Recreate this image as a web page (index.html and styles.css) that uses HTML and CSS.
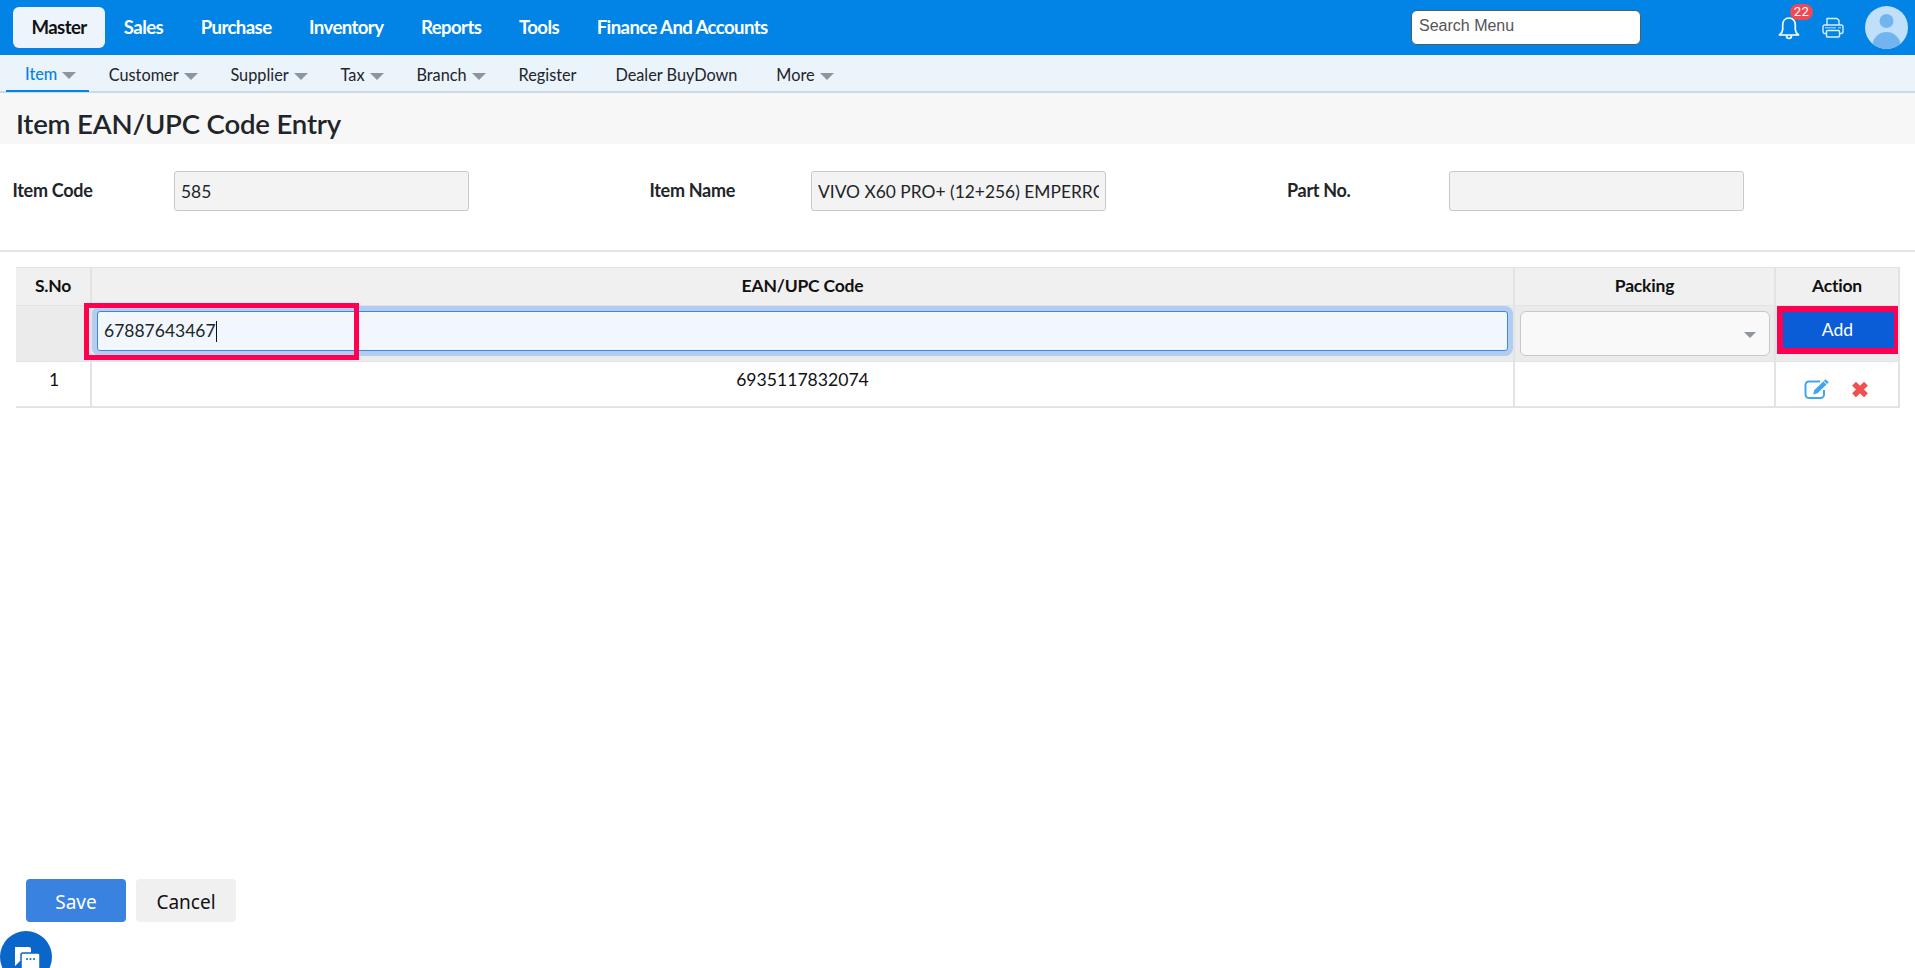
FILE: index.html
```html
<!DOCTYPE html>
<html lang="en">
<head>
<meta charset="utf-8">
<title>Item EAN/UPC Code Entry</title>
<link rel="stylesheet" href="styles.css">
</head>
<body>
<div class="page">
  <header class="topbar">
    <nav class="mainnav">
      <a class="mainlink active">Master</a>
      <a class="mainlink">Sales</a>
      <a class="mainlink">Purchase</a>
      <a class="mainlink">Inventory</a>
      <a class="mainlink">Reports</a>
      <a class="mainlink">Tools</a>
      <a class="mainlink">Finance And Accounts</a>
    </nav>
    <input class="search" type="text" placeholder="Search Menu">
    <div class="bell">
      <svg class="bellicon" width="24" height="25" viewBox="0 0 24 25" fill="none" stroke="#fff" stroke-width="1.700" stroke-linejoin="round"><path d="M12 2c-4 0-6.300 3-6.300 7v4.500c0 2.500-1.500 4-3.200 5.500h19c-1.700-1.500-3.200-3-3.200-5.500V9c0-4-2.300-7-6.300-7z"/><path d="M9.500 19.500c0 4 5 4 5 0"/></svg>
      <span class="badge">22</span>
    </div>
    <svg class="printer" width="22" height="22" viewBox="0 0 22 22" fill="none" stroke="#d8edff" stroke-width="1.400" stroke-linejoin="round"><path d="M5 8V1.500h10L17 3.500V8"/><path d="M4.500 16.500H3a2 2 0 0 1-2-2V10a2 2 0 0 1 2-2h16a2 2 0 0 1 2 2v4.500a2 2 0 0 1-2 2h-1.500"/><rect x="4.500" y="13.500" width="13" height="6.500" rx="1"/><path d="M3 10.800h11M16 10.800h3" stroke-width="0.900"/></svg>
    <svg class="avatar" width="43" height="43" viewBox="0 0 43 43"><defs><clipPath id="avatarclip"><circle cx="21.500" cy="21.500" r="21.500"/></clipPath></defs><circle cx="21.500" cy="21.500" r="21.500" fill="#bfdffb"/><g clip-path="url(#avatarclip)" fill="#72b4ee"><circle cx="21.500" cy="15" r="7"/><ellipse cx="21.500" cy="41" rx="14.500" ry="15"/></g></svg>
  </header>

  <nav class="subnav">
    <a class="sublink current">Item<i class="caret"></i></a>
    <a class="sublink">Customer<i class="caret"></i></a>
    <a class="sublink">Supplier<i class="caret"></i></a>
    <a class="sublink">Tax<i class="caret"></i></a>
    <a class="sublink">Branch<i class="caret"></i></a>
    <a class="sublink">Register</a>
    <a class="sublink">Dealer BuyDown</a>
    <a class="sublink">More<i class="caret"></i></a>
  </nav>

  <div class="titlebar"><h1 class="title">Item EAN/UPC Code Entry</h1></div>

  <section class="fields">
    <div class="field"><label class="fieldlabel">Item Code</label><input class="readonly" type="text" readonly value="585"></div>
    <div class="field"><label class="fieldlabel">Item Name</label><input class="readonly" type="text" readonly value="VIVO X60 PRO+ (12+256) EMPERROR BLUE"></div>
    <div class="field"><label class="fieldlabel">Part No.</label><input class="readonly" type="text" readonly value=""></div>
  </section>

  <main class="tablewrap">
    <table class="grid">
      <colgroup><col class="c1"><col class="c2"><col class="c3"><col class="c4"></colgroup>
      <thead>
        <tr><th>S.No</th><th>EAN/UPC Code</th><th>Packing</th><th>Action</th></tr>
      </thead>
      <tbody>
        <tr class="entry">
          <td></td>
          <td class="codecell">
            <div class="codeinput">67887643467<span class="cursor"></span></div>
            <div class="mark markcode"></div>
          </td>
          <td class="packcell"><div class="select"><i class="selectcaret"></i></div></td>
          <td class="addcell"><button class="addbtn">Add</button></td>
        </tr>
        <tr class="data">
          <td class="rownum">1</td>
          <td>6935117832074</td>
          <td></td>
          <td class="actions">
            <svg class="edit" width="26" height="21" viewBox="0 0 26 21" fill="none"><path d="M16 3.500H5A3.500 3.500 0 0 0 1.500 7v9.500A3.500 3.500 0 0 0 5 20h11.500a3.500 3.500 0 0 0 3.500-3.500V12" stroke="#42a5f0" stroke-width="2"/><path d="M21.500 1.200l3.300 3.100-11.300 11-4.300 1.300 1-4.300z" fill="#42a5f0"/><path d="M19.500 3.200l3.300 3.100" stroke="#fff" stroke-width="1"/></svg>
            <svg class="remove" width="18" height="17" viewBox="0 0 18 17" fill="none" stroke="#f24f4f" stroke-width="5.500"><path d="M3 2.800L15 14.200M15 2.800L3 14.200"/></svg>
          </td>
        </tr>
      </tbody>
    </table>
  </main>

  <footer class="buttons">
    <button class="btn save">Save</button>
    <button class="btn cancel">Cancel</button>
  </footer>

  <div class="chat">
    <svg width="30" height="30" viewBox="0 0 30 30"><path d="M3 3h14a2 2 0 0 1 2 2v12H8l-5 5z" fill="#fff"/><rect x="9" y="9" width="19" height="18" rx="2" fill="#fff" stroke="#0a66c8" stroke-width="1.500"/><circle cx="15" cy="15" r="1" fill="#0a66c8"/><circle cx="18.500" cy="15" r="1" fill="#0a66c8"/><circle cx="22" cy="15" r="1" fill="#0a66c8"/></svg>
  </div>
</div>
</body>
</html>
```
FILE: styles.css
```css
* { box-sizing: border-box; }
html, body { margin: 0; padding: 0; height: 100%; overflow: hidden; background: #fff; }
body { font-family: Lato, "Liberation Sans", sans-serif; color: #212529; }
.page { position: relative; height: 968px; display: flex; flex-direction: column; overflow: hidden; }

.topbar { height: 55px; background: #0284e6; display: flex; align-items: center; flex: none; }
.mainnav { display: flex; align-items: center; margin-left: 13px; width: 1398px; }
.mainlink { font-size: 18.600px; font-weight: 700; letter-spacing: -0.6px; color: #fff; padding: 0 18.800px; height: 41px; line-height: 40px; border-radius: 6px; white-space: nowrap; }
.mainlink.active { background: #edf4fb; color: #111; padding: 0 18.500px; }
.search { width: 230px; height: 35px; margin-top: -1px; border: 1px solid #44606e; border-radius: 6px; padding: 0 7px 2px; font: 16px "Liberation Sans", sans-serif; background: #fff; }
.search::placeholder { color: #555; opacity: 1; }
.bell { position: relative; width: 24px; height: 25px; margin-left: 136px; }
.bellicon { display: block; margin-top: 1px; }
.badge { position: absolute; left: 13px; top: -11px; width: 23px; height: 16px; border-radius: 8px; background: #ee4a55; color: #fff; font: 13px/16px Roboto, sans-serif; letter-spacing: 0.5px; text-align: center; }
.printer { margin-left: 21px; margin-top: 1px; flex: none; }
.avatar { margin-left: 21px; flex: none; }

.subnav { height: 38px; flex: none; background: #ebf3fb; border-bottom: 2px solid #c8dcec; display: flex; padding-left: 6px; }
.sublink { font-size: 16.300px; line-height: 36px; color: #212529; padding: 2px 19.450px 0; height: 37px; display: flex; align-items: center; white-space: nowrap; }
.sublink.current { color: #0284e6; font-weight: 500; border-bottom: 2px solid #0284e6; padding: 2px 19px 0; }
.caret { display: inline-block; width: 0; height: 0; margin-left: 5px; margin-right: -6px; margin-top: 3px; border-left: 7px solid transparent; border-right: 7px solid transparent; border-top: 7px solid #8f959c; }

.titlebar { height: 51px; flex: none; background: #f7f7f7; padding: 9px 0 0 16px; display: flex; align-items: center; }
.title { margin: 0; font-size: 27.600px; font-weight: 600; letter-spacing: -0.2px; color: #212529; }

.fields { display: grid; grid-template-columns: 637px 637.500px 637.500px; padding: 27px 0 0 12.500px; height: 108px; flex: none; border-bottom: 2px solid #e4e4e4; }
.field { display: flex; align-items: flex-start; }
.fieldlabel { width: 161.500px; flex: none; font-size: 18px; font-weight: 700; letter-spacing: -0.3px; line-height: 38px; color: #212529; }
.readonly { width: 295px; height: 40px; border: 1px solid #c8c8c8; border-radius: 3px; background: #f3f3f3; font-family: Lato, sans-serif; font-size: 17.400px; padding: 0 6px; color: #212529; outline: 0; }

.tablewrap { flex: 1; padding: 15px 16px 0; }
.grid { border-collapse: collapse; table-layout: fixed; width: 1883px; font-size: 17.600px; color: #111; }
.c1 { width: 75px; } .c2 { width: 1423px; } .c3 { width: 261px; } .c4 { width: 124px; }
.grid th { height: 38px; background: #f0f0f0; font-size: 17.500px; font-weight: 700; letter-spacing: -0.2px; border: 2px solid #e0e4e8; border-top-width: 1px; border-bottom-width: 1px; border-left: 0; text-align: center; padding: 0 0 2px; }
.grid td { text-align: center; padding: 0; border-right: 2px solid #e0e4e8; }
.entry td { height: 56px; background: #ebebeb; border-bottom: 1px solid #e0e4e8; vertical-align: top; }
.data td { height: 45px; vertical-align: top; padding-top: 7px; border-bottom: 2px solid #e0e4e8; line-height: 22px; }
.grid .rownum { padding-left: 2px; }

.codecell { position: relative; }
.grid .codecell { padding: 5px 5px 0 5px; }
.codeinput { height: 40px; border: 1px solid #3f86e0; border-radius: 3px; background: #f2f7fd; box-shadow: 0 0 0 5px #b3cdf0; font-size: 17.500px; line-height: 38px; text-align: left; padding-left: 6px; color: #212529; }
.cursor { display: inline-block; width: 1px; height: 21px; background: #111; vertical-align: -5px; }
.mark { position: absolute; border: 5px solid #ff0050; pointer-events: none; }
.markcode { left: -8px; top: -3px; width: 275px; height: 57px; }
.grid .packcell { padding: 5px 4px 0 5px; }
.select { position: relative; height: 45px; background: #f9f9f9; border: 1px solid #c8c8c8; border-radius: 6px; }
.selectcaret { position: absolute; right: 13px; top: 20px; border-left: 6px solid transparent; border-right: 6px solid transparent; border-top: 6px solid #8f959c; }
.grid .addcell { padding: 0 0 0 1px; }
.addbtn { display: block; width: 122px; height: 48px; background: #0a5dd6; border: 6px solid #ff0050; border-right-width: 5px; color: #fff; font-family: Lato, sans-serif; font-size: 17.500px; padding: 0 2px 2px 0; }
.grid .actions { padding-top: 16px; text-align: left; }
.edit { margin-left: 28px; vertical-align: top; }
.remove { margin-left: 16px; vertical-align: top; margin-top: 3px; }

.buttons { flex: none; display: flex; gap: 10px; padding: 0 0 46px 26px; }
.btn { width: 100px; height: 43px; border: 0; border-radius: 4px; font-family: "Noto Sans", sans-serif; font-size: 19px; padding: 2px 0 0; }
.save { background: #3a82e0; color: #fff; }
.cancel { background: #f0f0f0; color: #111; }

.chat { position: absolute; left: 0; top: 931px; width: 52px; height: 52px; border-radius: 50%; background: #0a66c8; padding: 13px 0 0 12px; }
.chat svg { display: block; }
```
